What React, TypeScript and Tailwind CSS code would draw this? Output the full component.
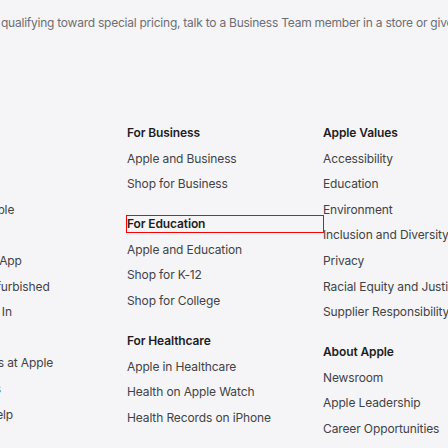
import React from 'react';

type Section = { title: string; links: string[]; highlight?: boolean };

const columns: Section[][] = [
  [
    {
      title: 'Apple Store',
      links: [
        'Find a Store',
        'Genius Bar',
        'Today at Apple',
        'Apple Camp',
        'Apple Store App',
        'Certified Refurbished',
        'Apple Trade In',
        'Financing',
        'Carrier Deals at Apple',
        'Order Status',
        'Shopping Help',
      ],
    },
  ],
  [
    { title: 'For Business', links: ['Apple and Business', 'Shop for Business'] },
    { title: 'For Education', links: ['Apple and Education', 'Shop for K-12', 'Shop for College'], highlight: true },
    { title: 'For Healthcare', links: ['Apple in Healthcare', 'Health on Apple Watch', 'Health Records on iPhone'] },
    { title: 'For Government', links: ['Shop for Government', 'Shop for Veterans and Military'] },
  ],
  [
    {
      title: 'Apple Values',
      links: [
        'Accessibility',
        'Education',
        'Environment',
        'Inclusion and Diversity',
        'Privacy',
        'Racial Equity and Justice',
        'Supplier Responsibility',
      ],
    },
    { title: 'About Apple', links: ['Newsroom', 'Apple Leadership', 'Career Opportunities', 'Investors'] },
  ],
];

const App = () => {
  return (
    <div
      className="w-[448px] h-[448px] overflow-hidden bg-[#f5f5f7] text-[12px] leading-[16px] tracking-[-0.01em]"
      style={{ fontFamily: 'Inter, "Liberation Sans", Arial, sans-serif' }}
    >
      {/* footnote line, cut at both edges */}
      <p className="pt-[15px] pl-px whitespace-nowrap tracking-[-0.02em] text-[#6e6e73]">
        qualifying toward special pricing, talk to a Business Team member in a store or give us a call at 1‑800‑854‑3680.
      </p>

      {/* footer directory */}
      <div className="mt-[94px] ml-[-69px] flex">
        {columns.map((col, i) => (
          <div key={i} className="w-[196px] shrink-0 flex flex-col gap-[24px]">
            {col.map((section) => (
              <div key={section.title} className="flex flex-col gap-[9.6px]">
                <h3
                  className={`h-[16px] font-semibold text-[#1d1d1f] whitespace-nowrap ${
                    section.highlight ? 'ring-1 ring-[#ff0000]' : ''
                  }`}
                >
                  {section.title}
                </h3>
                <ul className="flex flex-col gap-[9.6px]">
                  {section.links.map((link) => (
                    <li key={link} className="h-[16px] text-[#424245] whitespace-nowrap">
                      {link}
                    </li>
                  ))}
                </ul>
              </div>
            ))}
          </div>
        ))}
      </div>
    </div>
  );
};

export default App;
